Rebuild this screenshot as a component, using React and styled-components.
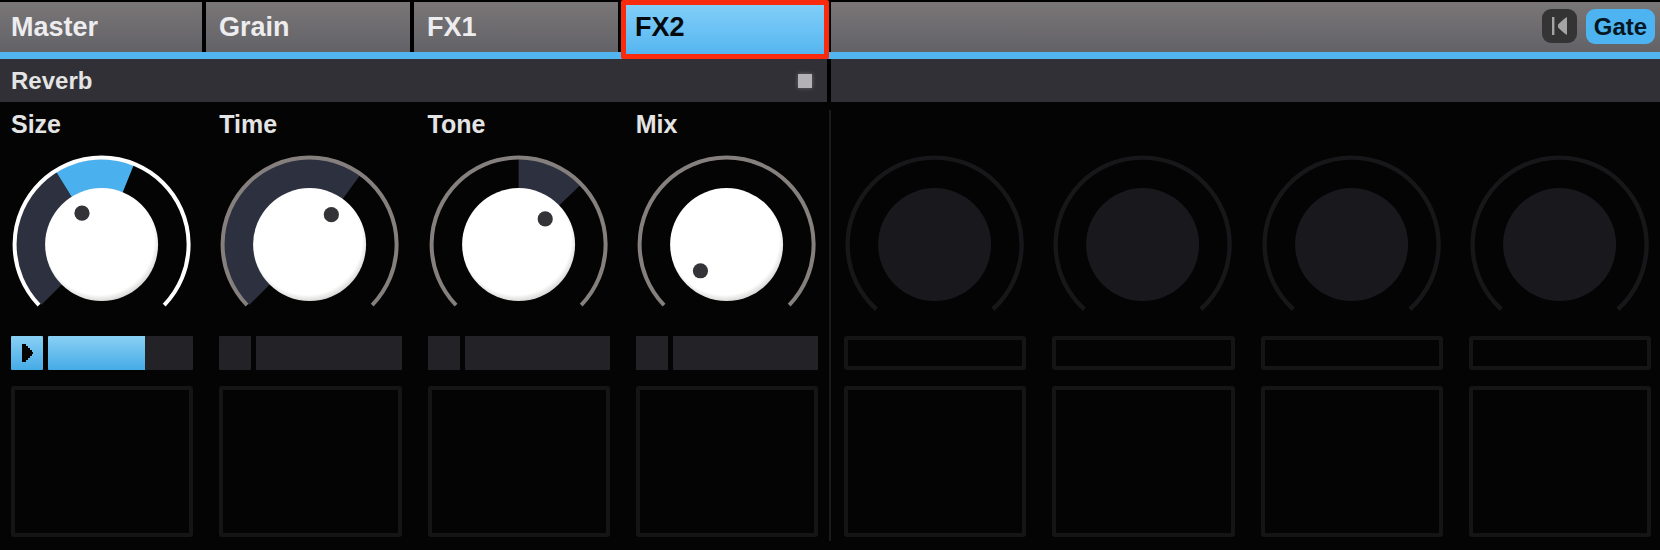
import React, { useState } from "react";
import styled, { createGlobalStyle } from "styled-components";

const GlobalStyle = createGlobalStyle`
	* {
		box-sizing: border-box;
	}
	body {
		margin: 0;
		min-height: 100vh;
		background-color: #040404;
		color: #e4e4e4;
		font-family: "Liberation Sans", Arial, sans-serif;
		font-weight: bold;
	}
	button {
		margin: 0;
		padding: 0;
		border: 0;
		font: inherit;
		cursor: pointer;
	}
`;

const TopBar = styled.nav`
	display: grid;
	grid-template-columns: 202fr 204fr 204fr 205fr 829fr;
	column-gap: 4px;
	padding-top: 2px;
	background-color: #000;
	border-bottom: 7px solid #52b5ef;
`;
const Tab = styled.button`
	position: relative;
	height: 50px;
	padding-left: 13px;
	font-size: 27px;
	line-height: 50px;
	text-align: left;
	color: ${({ $active }) => ($active ? "#04090d" : "#ededef")};
	background: ${({ $active }) =>
		$active
			? "linear-gradient(#84d0f9, #57b7f0)"
			: "linear-gradient(#7a7677, #626267)"};
	&:first-child {
		padding-left: 11px;
	}
	&::after {
		content: "";
		display: ${({ $active }) => ($active ? "block" : "none")};
		position: absolute;
		inset: -2px -2px -7px -1px;
		border: 5px solid #fa2a0c;
		border-radius: 2px;
	}
`;
const Tools = styled.div`
	display: flex;
	justify-content: flex-end;
	align-items: center;
	gap: 9px;
	padding: 0 5px 2px 0;
	background: linear-gradient(#7a7677, #626267);
`;
const SkipButton = styled.button`
	display: flex;
	align-items: center;
	justify-content: center;
	width: 35px;
	height: 34px;
	border-radius: 9px;
	background-color: #343435;
`;
const GateButton = styled.button`
	width: 69px;
	height: 35px;
	border-radius: 9px;
	font-size: 24px;
	line-height: 35px;
	color: #051722;
	background-color: #4db4f1;
`;

const Titles = styled.div`
	display: grid;
	grid-template-columns: 827fr 829fr;
	column-gap: 4px;
	background-color: #000;
`;
const Title = styled.header`
	display: flex;
	justify-content: space-between;
	align-items: center;
	height: 43px;
	padding: 0 15px 0 11px;
	background-color: #313036;
	h2 {
		margin: 0;
		font-size: 24px;
		line-height: 28px;
	}
`;
const Led = styled.button`
	width: 14px;
	height: 14px;
	background-color: #b3b1b6;
	box-shadow: 0 0 4px #6c6a70;
`;

const Body = styled.main`
	display: grid;
	grid-template-columns: 1fr 2px 1fr;
	padding: 8px 0;
`;
const Divider = styled.div`
	background-color: #1a1a1b;
`;
const Bank = styled.section`
	display: grid;
	grid-template-columns: repeat(4, 1fr);
	column-gap: 26px;
	padding: ${({ $right }) => ($right ? "0 9px 4px 13px" : "0 11px 4px 11px")};
`;
const Column = styled.div`
	display: flex;
	flex-direction: column;
	min-width: 0;
`;
const Label = styled.label`
	height: 28px;
	font-size: 25px;
	line-height: 28px;
`;
const KnobBox = styled.div`
	position: relative;
	display: flex;
	justify-content: center;
	margin: 16px 0 18px;
	input {
		position: absolute;
		inset: 0;
		width: 100%;
		height: 100%;
		margin: 0;
		opacity: 0;
	}
`;
const ModRow = styled.div`
	display: grid;
	grid-template-columns: 32px 1fr;
	column-gap: 5px;
	height: 34px;
`;
const ModButton = styled.button`
	display: flex;
	align-items: center;
	justify-content: center;
	border-radius: 1px;
	background: ${({ $on }) =>
		$on ? "linear-gradient(#8ad0f5, #45abe6)" : "#232227"};
`;
const ModAmount = styled.input`
	appearance: none;
	width: 100%;
	height: 34px;
	margin: 0;
	border-radius: 1px;
	background: linear-gradient(#8ad0f5, #45abe6) no-repeat #232227;
	background-size: ${({ value }) => `${value}% 100%`};
	&::-webkit-slider-thumb {
		appearance: none;
		width: 1px;
		height: 34px;
	}
`;
const EmptyMod = styled.div`
	height: 34px;
	border: 4px solid #151516;
	border-radius: 3px;
`;
const Pad = styled.div`
	height: 151px;
	margin-top: 16px;
	border: 4px solid #151516;
	border-radius: 3px;
`;

const TABS = ["Master", "Grain", "FX1", "FX2"];

// angles are in degrees, 0 is straight up
const PARAMS = [
	{ name: "Size", angle: -32, from: -135, mod: 67, modTo: 22 },
	{ name: "Time", angle: 36, from: -135, mod: 0 },
	{ name: "Tone", angle: 46, from: 0, mod: 0 },
	{ name: "Mix", angle: -135, from: -135, mod: 0 },
];

const CX = 89.6;
const CY = 90.6;

const point = (angle, r) => {
	const a = (angle * Math.PI) / 180;
	return [CX + r * Math.sin(a), CY - r * Math.cos(a)];
};

const arc = (from, to, r) => {
	const large = to - from > 180 ? 1 : 0;
	return `M${point(from, r)} A${r} ${r} 0 ${large} 1 ${point(to, r)}`;
};

const Dial = ({ angle, from, modTo }) => {
	const [x, y] = point(angle, 37);
	return (
		<svg width="180" height="164" viewBox="0 0 180 164" fill="none">
			<defs>
				<radialGradient id="cap" cx="0.48" cy="0.46" r="0.55">
					<stop offset="0.88" stopColor="#fff" />
					<stop offset="1" stopColor="#d4d3d1" />
				</radialGradient>
			</defs>
			{angle > from && (
				<path d={arc(from, angle, 70)} stroke="#2c303f" strokeWidth="31" />
			)}
			{modTo !== undefined && (
				<path d={arc(angle, modTo, 70)} stroke="#4bb1ee" strokeWidth="31" />
			)}
			<path
				d={arc(-134, 134, 87)}
				stroke={modTo !== undefined ? "#fff" : "#85807e"}
				strokeWidth="4"
			/>
			<circle cx={CX} cy={CY} r="56.5" fill="url(#cap)" />
			<circle cx={x} cy={y} r="7.6" fill="#343338" />
		</svg>
	);
};

const Param = ({ param }) => {
	const [angle, setAngle] = useState(param.angle);
	const [mod, setMod] = useState(param.mod);
	const id = `knob-${param.name}`;
	return (
		<Column>
			<Label htmlFor={id}>{param.name}</Label>
			<KnobBox>
				<Dial angle={angle} from={param.from} modTo={param.modTo} />
				<input
					id={id}
					type="range"
					min="-135"
					max="135"
					value={angle}
					onChange={(e) => setAngle(Number(e.target.value))}
				/>
			</KnobBox>
			<ModRow>
				<ModButton $on={mod > 0} aria-label={`${param.name} modulator`}>
					{mod > 0 && (
						<svg width="12" height="18" viewBox="0 0 12 18" fill="#040404">
							<path d="M1 0H5V2H7V4H9V6H11V8H12V10H11V12H9V14H7V16H5V18H1Z" />
						</svg>
					)}
				</ModButton>
				<ModAmount
					type="range"
					min="0"
					max="100"
					value={mod}
					aria-label={`${param.name} modulation amount`}
					onChange={(e) => setMod(Number(e.target.value))}
				/>
			</ModRow>
			<Pad />
		</Column>
	);
};

const EmptyParam = () => (
	<Column>
		<Label as="div" />
		<KnobBox>
			<svg width="180" height="164" viewBox="0 0 180 164" fill="none">
				<path d={arc(-138, 138, 87)} stroke="#17171a" strokeWidth="4.4" />
				<circle cx={CX} cy={CY} r="56.5" fill="#19181c" />
			</svg>
		</KnobBox>
		<EmptyMod />
		<Pad />
	</Column>
);

const App = () => {
	const [tab, setTab] = useState("FX2");
	return (
		<>
			<GlobalStyle />
			<TopBar>
				{TABS.map((name) => (
					<Tab key={name} $active={name === tab} onClick={() => setTab(name)}>
						{name}
					</Tab>
				))}
				<Tools>
					<SkipButton aria-label="Back to start">
						<svg width="16" height="18" viewBox="0 0 16 18" fill="#a5a4a5">
							<path d="M0 0H2.4V18H0Z" />
							<path d="M15 0V18L12 16L6 10.5V7.5L12 2Z" />
						</svg>
					</SkipButton>
					<GateButton>Gate</GateButton>
				</Tools>
			</TopBar>
			<Titles>
				<Title>
					<h2>Reverb</h2>
					<Led aria-label="Reverb on" />
				</Title>
				<Title />
			</Titles>
			<Body>
				<Bank>
					{PARAMS.map((param) => (
						<Param key={param.name} param={param} />
					))}
				</Bank>
				<Divider />
				<Bank $right>
					{[0, 1, 2, 3].map((n) => (
						<EmptyParam key={n} />
					))}
				</Bank>
			</Body>
		</>
	);
};

export default App;
